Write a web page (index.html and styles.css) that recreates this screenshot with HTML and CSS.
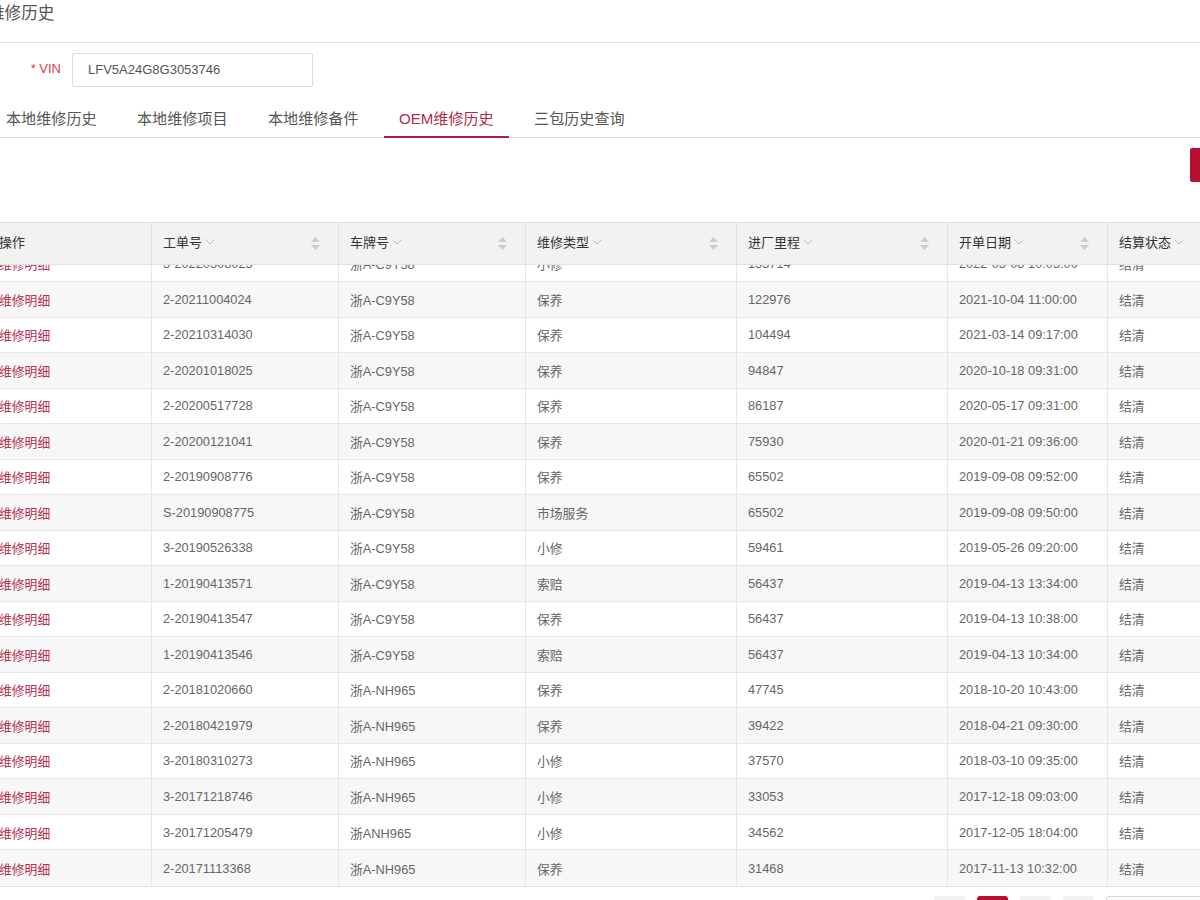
FILE: index.html
```html
<!DOCTYPE html>
<html lang="zh-CN">
<head>
<meta charset="utf-8">
<title>维修历史</title>
<link rel="stylesheet" href="styles.css">
</head>
<body>
<div class="page">
  <div class="title">维修历史</div>
  <div class="form-row">
    <label class="label"><span class="req">*</span> VIN</label>
    <div class="input">LFV5A24G8G3053746</div>
  </div>
  <div class="tabs">
    <div class="tab">本地维修历史</div>
    <div class="tab">本地维修项目</div>
    <div class="tab">本地维修备件</div>
    <div class="tab active">OEM维修历史</div>
    <div class="tab">三包历史查询</div>
  </div>
  <div class="toolbar">
    <button class="btn-red">导出</button>
  </div>
  <div class="table">
    <div class="thead">
      <div class="th">操作</div>
      <div class="th sortable"><span>工单号</span><svg class="chev" width="10" height="6" viewBox="0 0 10 6"><polyline points="0.5,0.5 5,5 9.5,0.5" fill="none" stroke="#bbb" stroke-width="1"/></svg><svg class="sort" width="9" height="13" viewBox="0 0 9 13"><polygon points="4.5,0 9,5 0,5" fill="#ccc"/><polygon points="0,8 9,8 4.5,13" fill="#ccc"/></svg></div>
      <div class="th sortable"><span>车牌号</span><svg class="chev" width="10" height="6" viewBox="0 0 10 6"><polyline points="0.5,0.5 5,5 9.5,0.5" fill="none" stroke="#bbb" stroke-width="1"/></svg><svg class="sort" width="9" height="13" viewBox="0 0 9 13"><polygon points="4.5,0 9,5 0,5" fill="#ccc"/><polygon points="0,8 9,8 4.5,13" fill="#ccc"/></svg></div>
      <div class="th sortable"><span>维修类型</span><svg class="chev" width="10" height="6" viewBox="0 0 10 6"><polyline points="0.5,0.5 5,5 9.5,0.5" fill="none" stroke="#bbb" stroke-width="1"/></svg><svg class="sort" width="9" height="13" viewBox="0 0 9 13"><polygon points="4.5,0 9,5 0,5" fill="#ccc"/><polygon points="0,8 9,8 4.5,13" fill="#ccc"/></svg></div>
      <div class="th sortable"><span>进厂里程</span><svg class="chev" width="10" height="6" viewBox="0 0 10 6"><polyline points="0.5,0.5 5,5 9.5,0.5" fill="none" stroke="#bbb" stroke-width="1"/></svg><svg class="sort" width="9" height="13" viewBox="0 0 9 13"><polygon points="4.5,0 9,5 0,5" fill="#ccc"/><polygon points="0,8 9,8 4.5,13" fill="#ccc"/></svg></div>
      <div class="th sortable"><span>开单日期</span><svg class="chev" width="10" height="6" viewBox="0 0 10 6"><polyline points="0.5,0.5 5,5 9.5,0.5" fill="none" stroke="#bbb" stroke-width="1"/></svg><svg class="sort" width="9" height="13" viewBox="0 0 9 13"><polygon points="4.5,0 9,5 0,5" fill="#ccc"/><polygon points="0,8 9,8 4.5,13" fill="#ccc"/></svg></div>
      <div class="th sortable"><span>结算状态</span><svg class="chev" width="10" height="6" viewBox="0 0 10 6"><polyline points="0.5,0.5 5,5 9.5,0.5" fill="none" stroke="#bbb" stroke-width="1"/></svg><svg class="sort" width="9" height="13" viewBox="0 0 9 13"><polygon points="4.5,0 9,5 0,5" fill="#ccc"/><polygon points="0,8 9,8 4.5,13" fill="#ccc"/></svg></div>
    </div>
    <div class="tbody">
      <div class="rows">
        <div class="tr"><div class="td link">维修明细</div><div class="td">3-20220308025</div><div class="td">浙A-C9Y58</div><div class="td">小修</div><div class="td">135714</div><div class="td">2022-03-08 10:05:00</div><div class="td">结清</div></div>
        <div class="tr"><div class="td link">维修明细</div><div class="td">2-20211004024</div><div class="td">浙A-C9Y58</div><div class="td">保养</div><div class="td">122976</div><div class="td">2021-10-04 11:00:00</div><div class="td">结清</div></div>
        <div class="tr"><div class="td link">维修明细</div><div class="td">2-20210314030</div><div class="td">浙A-C9Y58</div><div class="td">保养</div><div class="td">104494</div><div class="td">2021-03-14 09:17:00</div><div class="td">结清</div></div>
        <div class="tr"><div class="td link">维修明细</div><div class="td">2-20201018025</div><div class="td">浙A-C9Y58</div><div class="td">保养</div><div class="td">94847</div><div class="td">2020-10-18 09:31:00</div><div class="td">结清</div></div>
        <div class="tr"><div class="td link">维修明细</div><div class="td">2-20200517728</div><div class="td">浙A-C9Y58</div><div class="td">保养</div><div class="td">86187</div><div class="td">2020-05-17 09:31:00</div><div class="td">结清</div></div>
        <div class="tr"><div class="td link">维修明细</div><div class="td">2-20200121041</div><div class="td">浙A-C9Y58</div><div class="td">保养</div><div class="td">75930</div><div class="td">2020-01-21 09:36:00</div><div class="td">结清</div></div>
        <div class="tr"><div class="td link">维修明细</div><div class="td">2-20190908776</div><div class="td">浙A-C9Y58</div><div class="td">保养</div><div class="td">65502</div><div class="td">2019-09-08 09:52:00</div><div class="td">结清</div></div>
        <div class="tr"><div class="td link">维修明细</div><div class="td">S-20190908775</div><div class="td">浙A-C9Y58</div><div class="td">市场服务</div><div class="td">65502</div><div class="td">2019-09-08 09:50:00</div><div class="td">结清</div></div>
        <div class="tr"><div class="td link">维修明细</div><div class="td">3-20190526338</div><div class="td">浙A-C9Y58</div><div class="td">小修</div><div class="td">59461</div><div class="td">2019-05-26 09:20:00</div><div class="td">结清</div></div>
        <div class="tr"><div class="td link">维修明细</div><div class="td">1-20190413571</div><div class="td">浙A-C9Y58</div><div class="td">索赔</div><div class="td">56437</div><div class="td">2019-04-13 13:34:00</div><div class="td">结清</div></div>
        <div class="tr"><div class="td link">维修明细</div><div class="td">2-20190413547</div><div class="td">浙A-C9Y58</div><div class="td">保养</div><div class="td">56437</div><div class="td">2019-04-13 10:38:00</div><div class="td">结清</div></div>
        <div class="tr"><div class="td link">维修明细</div><div class="td">1-20190413546</div><div class="td">浙A-C9Y58</div><div class="td">索赔</div><div class="td">56437</div><div class="td">2019-04-13 10:34:00</div><div class="td">结清</div></div>
        <div class="tr"><div class="td link">维修明细</div><div class="td">2-20181020660</div><div class="td">浙A-NH965</div><div class="td">保养</div><div class="td">47745</div><div class="td">2018-10-20 10:43:00</div><div class="td">结清</div></div>
        <div class="tr"><div class="td link">维修明细</div><div class="td">2-20180421979</div><div class="td">浙A-NH965</div><div class="td">保养</div><div class="td">39422</div><div class="td">2018-04-21 09:30:00</div><div class="td">结清</div></div>
        <div class="tr"><div class="td link">维修明细</div><div class="td">3-20180310273</div><div class="td">浙A-NH965</div><div class="td">小修</div><div class="td">37570</div><div class="td">2018-03-10 09:35:00</div><div class="td">结清</div></div>
        <div class="tr"><div class="td link">维修明细</div><div class="td">3-20171218746</div><div class="td">浙A-NH965</div><div class="td">小修</div><div class="td">33053</div><div class="td">2017-12-18 09:03:00</div><div class="td">结清</div></div>
        <div class="tr"><div class="td link">维修明细</div><div class="td">3-20171205479</div><div class="td">浙ANH965</div><div class="td">小修</div><div class="td">34562</div><div class="td">2017-12-05 18:04:00</div><div class="td">结清</div></div>
        <div class="tr"><div class="td link">维修明细</div><div class="td">2-20171113368</div><div class="td">浙A-NH965</div><div class="td">保养</div><div class="td">31468</div><div class="td">2017-11-13 10:32:00</div><div class="td">结清</div></div>
      </div>
    </div>
  </div>
  <div class="pager">
    <div class="pg">‹</div>
    <div class="pg active">1</div>
    <div class="pg">2</div>
    <div class="pg">›</div>
    <div class="pg-select">10 条/页</div>
  </div>
</div>
</body>
</html>
```
FILE: styles.css
```css
* { box-sizing: border-box; }
html, body { margin: 0; padding: 0; background: #fff; overflow: hidden; }
body {
  font-family: "Liberation Sans", "Noto Sans CJK SC", sans-serif;
  color: #666;
  font-size: 13px;
  width: 1200px;
  height: 900px;
}
.page {
  width: 1300px;
  margin-left: -12px;
}
.title {
  font-size: 16.6px;
  line-height: 26px;
  padding-top: 1px;
  height: 43px;
  color: #555;
  border-bottom: 1px solid #ddd;
}
.form-row {
  display: flex;
  align-items: center;
  margin-top: 10px;
}
.label {
  width: 84px;
  padding-right: 11px;
  text-align: right;
  color: #e0394f;
  font-size: 13px;
  margin-top: -4px;
}
.input {
  width: 241px;
  height: 34px;
  border: 1px solid #dcdcdc;
  border-radius: 2px;
  padding-left: 15px;
  line-height: 32px;
  color: #555;
  font-size: 13px;
}
.tabs {
  display: flex;
  margin-top: 14px;
  padding-left: 3px;
  border-bottom: 1px solid #ddd;
  height: 37px;
}
.tab {
  padding: 0 15px;
  margin-right: 10.4px;
  height: 37px;
  line-height: 35px;
  font-size: 15.1px;
  color: #555;
  border-bottom: 2px solid transparent;
}
.tab.active {
  color: #b52a4a;
  border-bottom-color: #a8223f;
}
.toolbar {
  display: flex;
  justify-content: flex-end;
  padding: 10px 18px 0 0;
  height: 84px;
}
.btn-red {
  width: 80px;
  height: 34px;
  border: none;
  background: #b70f2f;
  color: #fff;
  font-family: inherit;
  font-size: 13px;
  padding: 0 0 0 20px;
  border-radius: 2px;
}
.table {
  border-top: 1px solid #e2e2e2;
}
.thead, .tr {
  display: grid;
  grid-template-columns: 164px 187px 187px 211px 211px 160px 1fr;
}
.thead {
  height: 42px;
  background: #f2f2f2;
  border-bottom: 1px solid #e2e2e2;
  position: relative;
  z-index: 1;
}
.th {
  display: flex;
  align-items: center;
  padding: 0 18px 4px 11px;
  color: #333;
  font-size: 13px;
  border-right: 1px solid #e2e2e2;
}
.th .chev { margin-left: 3px; margin-top: 1px; }
.th .sort { margin-left: auto; margin-top: 3px; }
.tbody {
  overflow: hidden;
  border-bottom: 1px solid #e2e2e2;
}
.rows {
  margin-top: -18.5px;
}
.tr {
  height: 35.53px;
  border-bottom: 1px solid #e6e6e6;
}
.tr:last-child { border-bottom: none; }
.tr:nth-child(even) { background: #f7f7f7; }
.td {
  display: flex;
  align-items: center;
  padding-left: 11px;
  border-right: 1px solid #e6e6e6;
  color: #666;
  font-size: 12.8px;
  white-space: nowrap;
}
.td.link { color: #b4304e; }
.pager {
  display: flex;
  gap: 12px;
  margin-top: 9px;
  padding-left: 946px;
}
.pg {
  width: 31px;
  height: 30px;
  background: #f2f2f2;
  border-radius: 3px;
  text-align: center;
  line-height: 30px;
  color: #666;
}
.pg.active { background: #b70f2f; color: #fff; }
.pg-select {
  width: 110px;
  height: 30px;
  border: 1px solid #d6d6d6;
  border-radius: 3px;
  padding-left: 10px;
  line-height: 28px;
}
```
